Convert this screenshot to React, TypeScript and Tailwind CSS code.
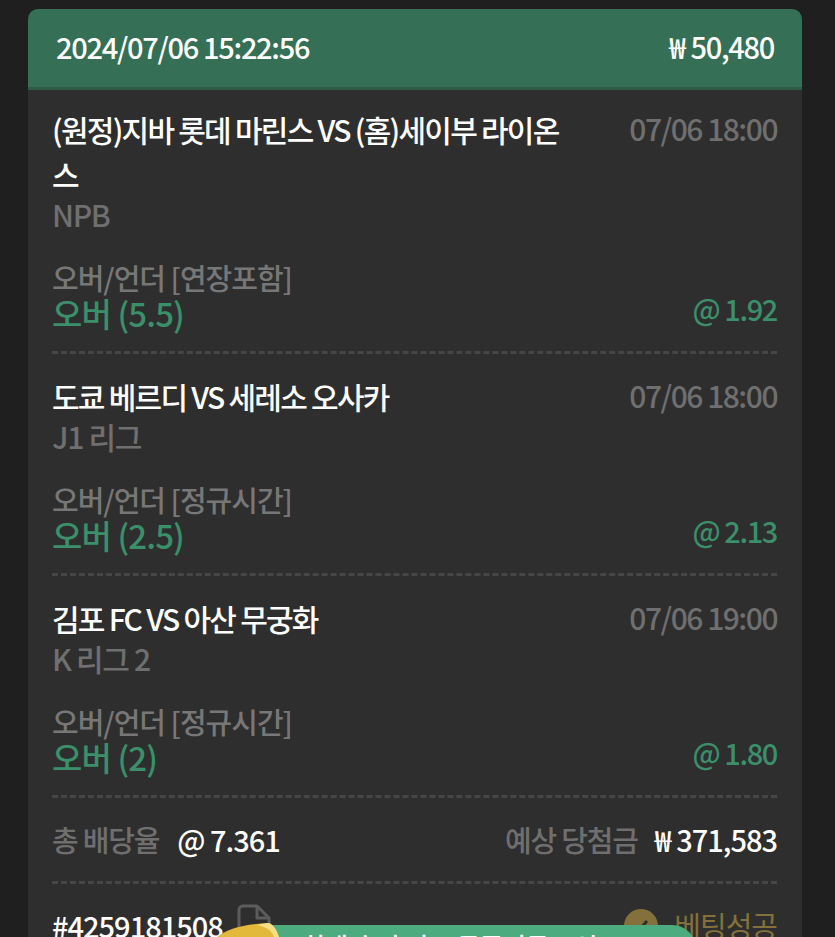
import React from 'react';

const font = { fontFamily: '"Noto Sans CJK KR", "Noto Sans", sans-serif' };

const bets = [
  { title: '(원정)지바 롯데 마린스 VS (홈)세이부 라이온스', time: '07/06 18:00', league: 'NPB', market: '오버/언더 [연장포함]', pick: '오버 (5.5)', odds: '@ 1.92' },
  { title: '도쿄 베르디 VS 세레소 오사카', time: '07/06 18:00', league: 'J1 리그', market: '오버/언더 [정규시간]', pick: '오버 (2.5)', odds: '@ 2.13' },
  { title: '김포 FC VS 아산 무궁화', time: '07/06 19:00', league: 'K 리그 2', market: '오버/언더 [정규시간]', pick: '오버 (2)', odds: '@ 1.80' },
];

const Divider = () => <div className="border-t-[3px] border-dashed border-[#464646]" />;

const BetRow = ({ bet }: { bet: (typeof bets)[number] }) => (
  <div className="pt-[20px] first:pt-[17px]">
    <div className="flex justify-between">
      <p className="w-[512px] text-[30px] leading-[45px] font-medium tracking-[-1.75px] text-white">{bet.title}</p>
      <p className="text-[30px] leading-[43px] font-medium tracking-[-1.5px] text-[#6f6f6f]">{bet.time}</p>
    </div>
    <p className="mt-[-3px] text-[30px] leading-[40px] font-medium tracking-[-1.3px] text-[#6f6f6f]">{bet.league}</p>
    <p className="mt-[25px] text-[29px] leading-[36px] font-medium tracking-[-1px] text-[#777777]">{bet.market}</p>
    <div className="mt-[-1px] flex items-center justify-between">
      <p className="text-[33px] leading-[38px] font-medium tracking-[-0.9px] text-[#3b8f6b]">{bet.pick}</p>
      <p className="mb-[10px] text-[29px] leading-[28px] font-medium tracking-[-1.4px] text-[#3b8f6b]">{bet.odds}</p>
    </div>
    <div className="mt-[19px]">
      <Divider />
    </div>
  </div>
);

export default function App() {
  return (
    <div style={font} className="relative h-[937px] overflow-hidden bg-[#1f1f1f] pt-[9px] pr-[33px] pl-[28px]">
      <div className="h-[1000px] rounded-t-[10px] bg-[#2e2e2e]">
        <div className="flex h-[81px] items-center justify-between rounded-t-[10px] border-b-[3px] border-[#2c5c45] bg-[#356f55] px-[28px] pb-[2px] text-[29px] font-medium tracking-[-1.3px] text-white">
          <span>2024/07/06 15:22:56</span>
          <span>
            <span className="mr-[6px]">₩</span>50,480
          </span>
        </div>
        <div className="pr-[25px] pl-[24px]">
          {bets.map((bet) => (
            <BetRow key={bet.title} bet={bet} />
          ))}
          <div className="flex h-[83px] items-center justify-between text-[29px] tracking-[-1px]">
            <div className="flex gap-[18px]">
              <span className="font-medium tracking-[-1.2px] text-[#6f6f6f]">총 배당율</span>
              <span className="font-medium text-white">@ 7.361</span>
            </div>
            <div className="flex gap-[17px]">
              <span className="font-medium tracking-[-1.2px] text-[#6f6f6f]">예상 당첨금</span>
              <span className="font-medium text-white">
                <span className="mr-[6px]">₩</span>371,583
              </span>
            </div>
          </div>
          <Divider />
          <div className="flex items-center justify-between pt-[20px] text-[29px] tracking-[-1px]">
            <div className="flex items-center gap-[12px]">
              <span className="font-medium text-white">#4259181508</span>
              <svg width="38" height="44" viewBox="0 0 38 44" fill="none" stroke="#5c5c5c" strokeWidth="3" strokeLinejoin="round">
                <path d="M4 34V6a4 4 0 0 1 4-4h14l12 12v20a4 4 0 0 1-4 4H8a4 4 0 0 1-4-4Z" />
                <path d="M22 2v12h12" />
              </svg>
            </div>
            <div className="flex items-center gap-[16px] text-[#83703a]">
              <span className="flex h-[34px] w-[34px] items-center justify-center rounded-full bg-[#83703a]">
                <svg width="20" height="20" viewBox="0 0 20 20" fill="none" stroke="#2e2e2e" strokeWidth="3">
                  <path d="M4 10l4 4 8-9" />
                </svg>
              </span>
              <span>베팅성공</span>
            </div>
          </div>
        </div>
      </div>
      <div className="absolute top-[925px] left-[236px] h-[60px] w-[460px] rounded-t-[24px] bg-[#4dab80] pt-[2px] pl-[66px] text-[25px] font-medium whitespace-nowrap text-white">
        최대 승리 리그 쿠폰지급 <span className="text-[#d8e24a]">1</span> 인
      </div>
      <svg className="absolute top-[923px] left-[217px]" width="62" height="14" viewBox="0 0 62 14">
        <path d="M0 14C10 6 26 1 52 0c5 2 8 8 10 14Z" fill="#e3b93c" />
        <path d="M40 2C44 1 48 0 52 0c5 2 8 8 10 14h-5C55 8 50 4 40 2Z" fill="#f6df86" />
      </svg>
    </div>
  );
}
